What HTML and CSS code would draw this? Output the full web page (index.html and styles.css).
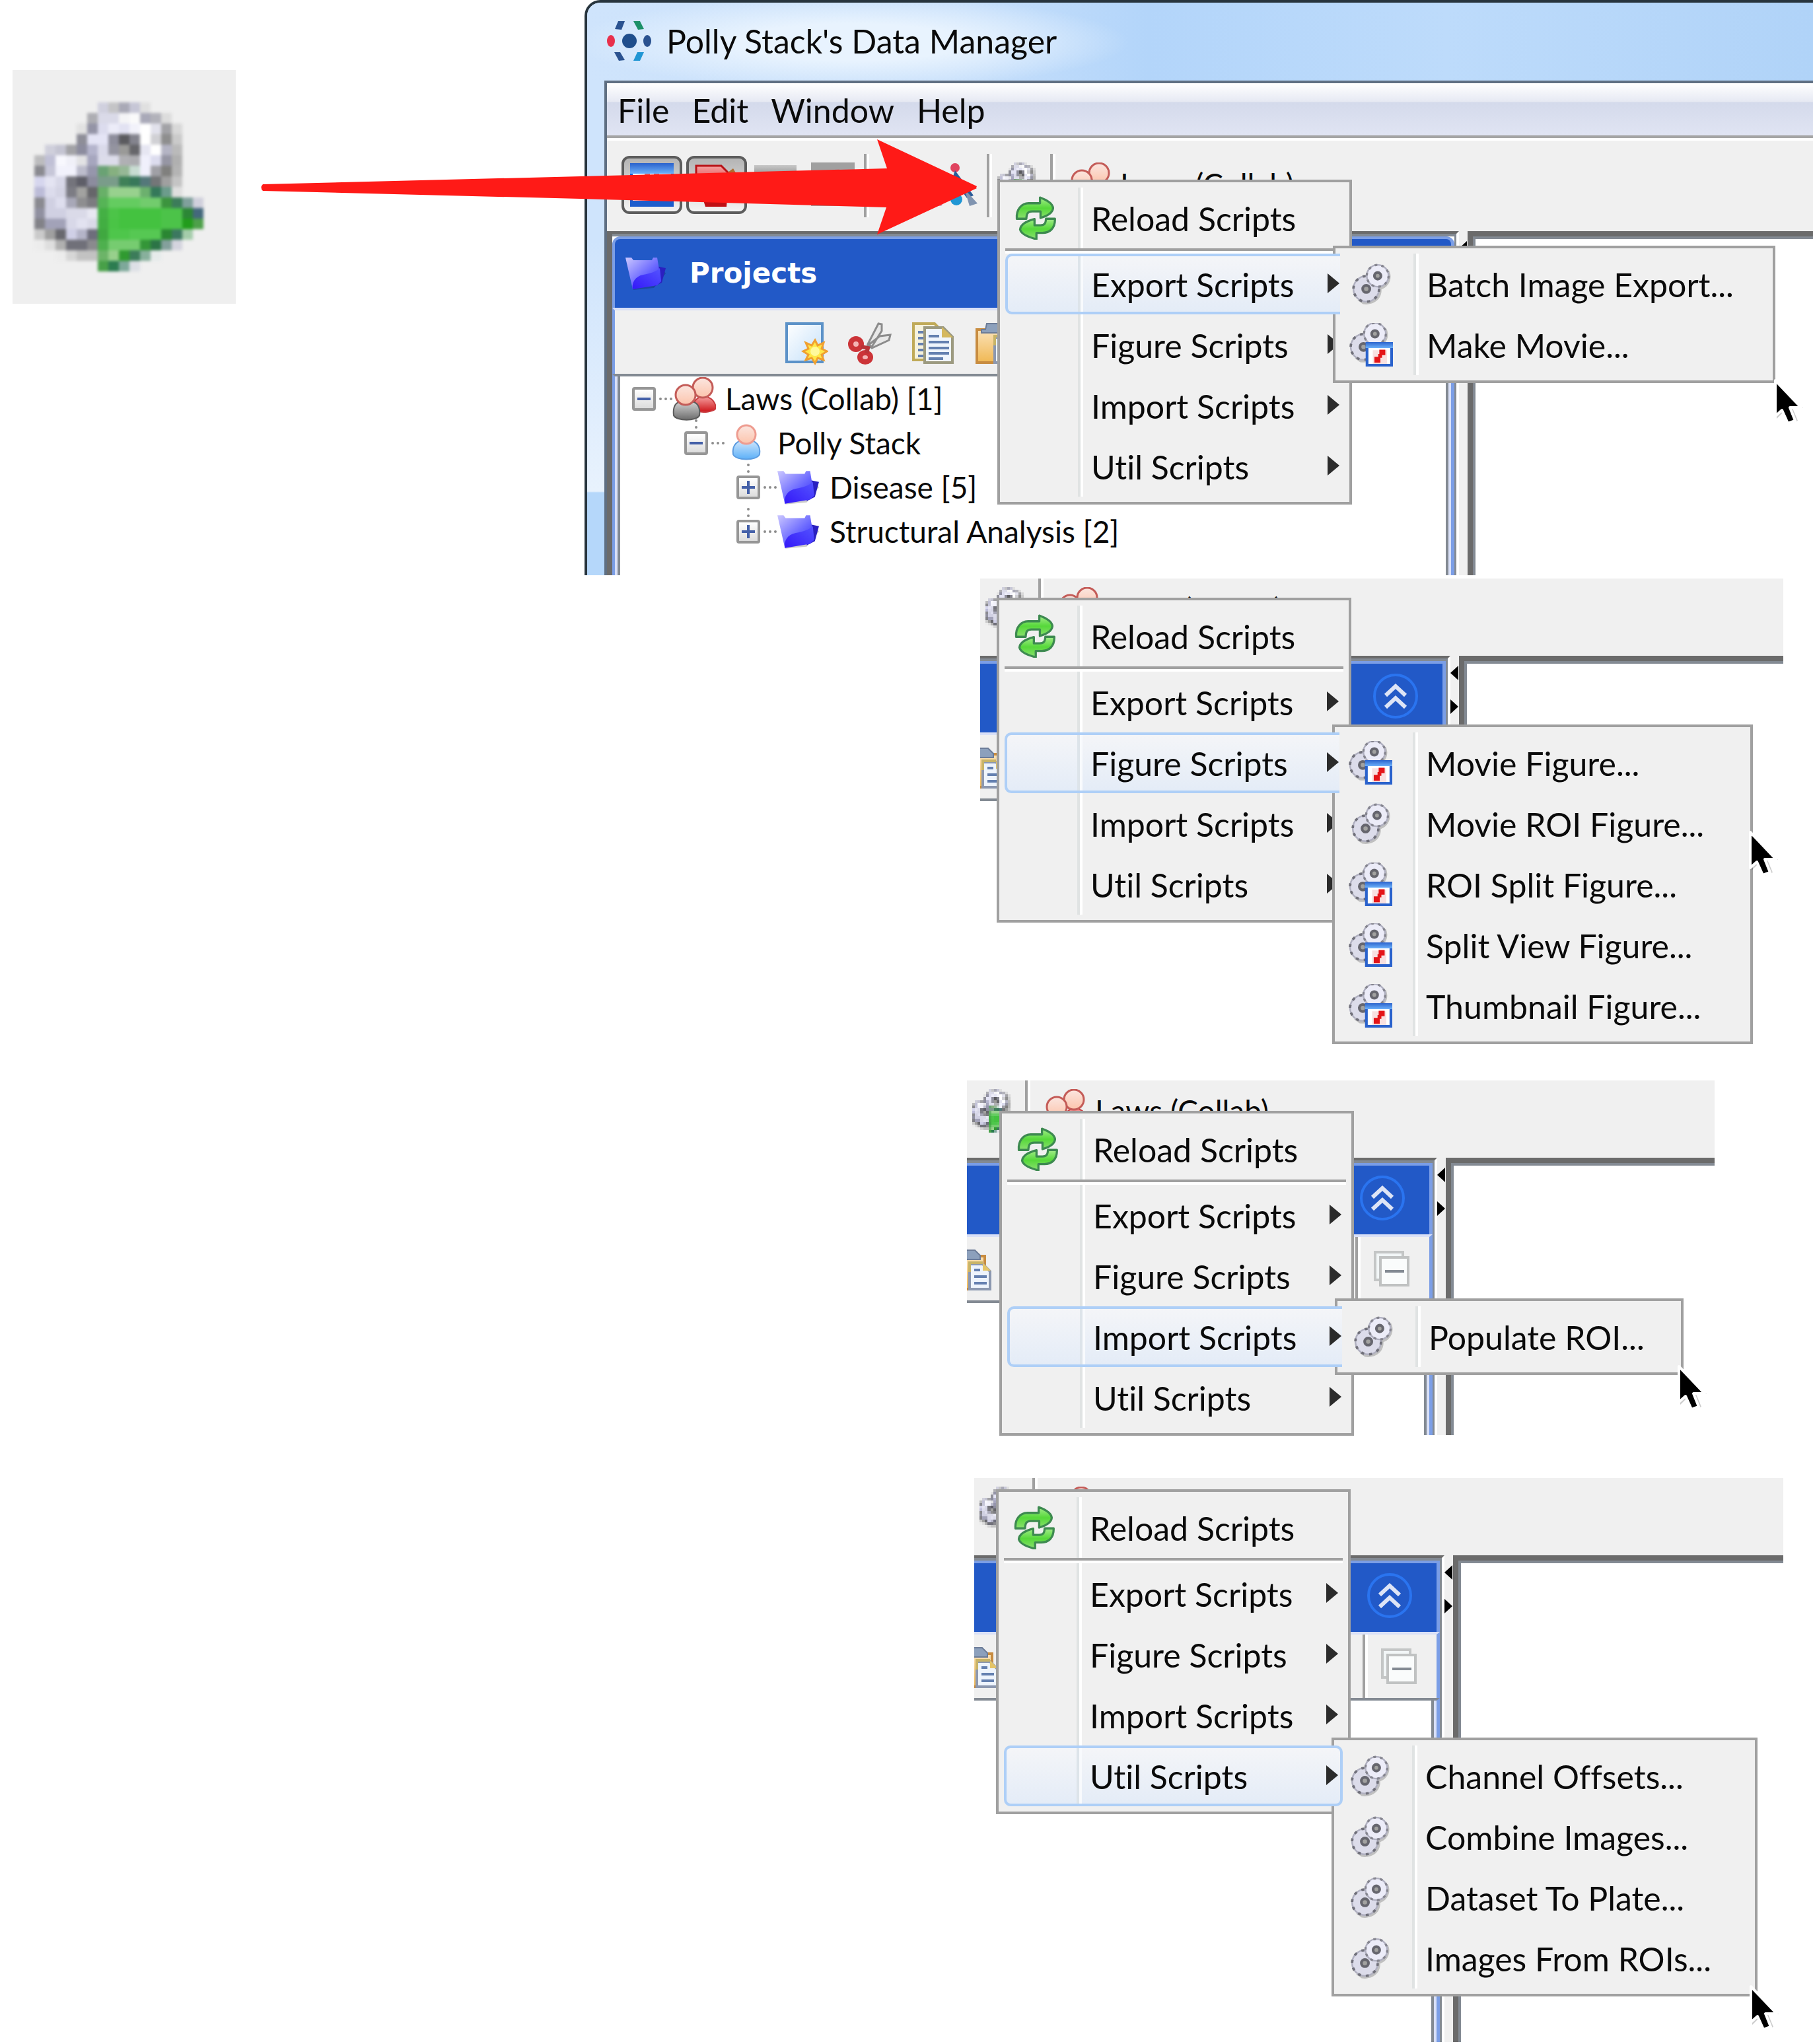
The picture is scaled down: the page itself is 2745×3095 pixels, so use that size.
FILE: index.html
```html
<!DOCTYPE html>
<html lang="en">
<head>
<meta charset="utf-8">
<title>Running scripts from the Data Manager</title>
<link rel="stylesheet" href="styles.css">
</head>
<body>
<svg class="defs" aria-hidden="true">
  <defs>
    <linearGradient id="g-green" x1="0" y1="0" x2="0" y2="1"><stop offset="0" stop-color="#a4ec8c"/><stop offset=".5" stop-color="#56d83a"/><stop offset="1" stop-color="#8be070"/></linearGradient>
    <linearGradient id="g-folder" x1="0" y1="0" x2="1" y2="1"><stop offset="0" stop-color="#ccc8ff"/><stop offset=".55" stop-color="#6a68ff"/><stop offset="1" stop-color="#2a20f0"/></linearGradient>
    <linearGradient id="g-flap" x1="1" y1="0" x2="0" y2="1"><stop offset="0" stop-color="#5454ff"/><stop offset="1" stop-color="#3418f8"/></linearGradient>
    <linearGradient id="g-skin" x1="0" y1="0" x2="0" y2="1"><stop offset="0" stop-color="#fbe6e0"/><stop offset="1" stop-color="#fcc4ac"/></linearGradient>
    <linearGradient id="g-red" x1="0" y1="0" x2="0" y2="1"><stop offset="0" stop-color="#f6a0a0"/><stop offset="1" stop-color="#cc1418"/></linearGradient>
    <linearGradient id="g-grey" x1="0" y1="0" x2="0" y2="1"><stop offset="0" stop-color="#d8d8d8"/><stop offset="1" stop-color="#6c6c6c"/></linearGradient>
    <linearGradient id="g-blue" x1="0" y1="0" x2="0" y2="1"><stop offset="0" stop-color="#d4e8fc"/><stop offset="1" stop-color="#5cb0f8"/></linearGradient>
    <linearGradient id="g-page" x1="0" y1="0" x2="1" y2="1"><stop offset="0" stop-color="#fff"/><stop offset="1" stop-color="#c4e0fa"/></linearGradient>
    <linearGradient id="g-clip" x1="0" y1="0" x2="0" y2="1"><stop offset="0" stop-color="#fbe2b8"/><stop offset="1" stop-color="#f0b854"/></linearGradient>
    <linearGradient id="g-bar" x1="0" y1="0" x2="0" y2="1"><stop offset="0" stop-color="#2a62cc"/><stop offset="1" stop-color="#6cb0fa"/></linearGradient>
  </defs>

  <symbol id="i-run" viewBox="0 0 16 16"><g stroke-width="1" shape-rendering="crispEdges">
    <path stroke="#d0d0de" d="M6 .5h1"/><path stroke="#c4c4c6" d="M7 .5h1"/><path stroke="#a9a9b6" d="M8 .5h1"/><path stroke="#c6c6d6" d="M9 .5h1"/><path stroke="#e0e0e0" d="M10 .5h1"/>
    <path stroke="#adadb2" d="M5 1.5h1"/><path stroke="#dadae8" d="M6 1.5h2"/><path stroke="#f4f4f6" d="M8 1.5h1"/><path stroke="#fafafa" d="M9 1.5h1"/><path stroke="#a9a9b8" d="M10 1.5h1"/><path stroke="#b2b2ba" d="M11 1.5h1"/><path stroke="#dcdcdc" d="M12 1.5h1"/>
    <path stroke="#e2e2e2" d="M4 2.5h1"/><path stroke="#9494a6" d="M5 2.5h1"/><path stroke="#dcdcee" d="M6 2.5h1"/><path stroke="#ececf8" d="M7 2.5h1"/><path stroke="#e2e2f2" d="M8 2.5h1"/><path stroke="#f2f2fa" d="M9 2.5h1"/><path stroke="#fff" d="M10 2.5h1"/><path stroke="#e2e2ec" d="M11 2.5h1"/><path stroke="#a2a2a6" d="M12 2.5h1"/><path stroke="#d8d8d8" d="M13 2.5h1"/>
    <path stroke="#8e8e98" d="M4 3.5h1"/><path stroke="#e4e4f5" d="M5 3.5h2"/><path stroke="#8e8e9c" d="M7 3.5h1"/><path stroke="#5a5a5e" d="M8 3.5h1"/><path stroke="#84848e" d="M9 3.5h1"/><path stroke="#fff" d="M10 3.5h1"/><path stroke="#d0d0d4" d="M11 3.5h1"/><path stroke="#8e8e8e" d="M12 3.5h1"/><path stroke="#cacaca" d="M13 3.5h1"/>
    <path stroke="#cfcfdb" d="M1 4.5h1"/><path stroke="#c4c4d2" d="M2 4.5h1"/><path stroke="#a2a2a6" d="M3 4.5h1"/><path stroke="#8c8c9e" d="M4 4.5h1"/><path stroke="#b4b4cc" d="M5 4.5h1"/><path stroke="#dadaea" d="M6 4.5h1"/><path stroke="#9494a0" d="M7 4.5h1"/><path stroke="#9a9a98" d="M8 4.5h1"/><path stroke="#66666a" d="M9 4.5h1"/><path stroke="#e6e6f2" d="M10 4.5h1"/><path stroke="#fff" d="M11 4.5h1"/><path stroke="#b4b4c4" d="M12 4.5h1"/><path stroke="#bababa" d="M13 4.5h1"/>
    <path stroke="#bcbcbe" d="M0 5.5h1"/><path stroke="#c0c0d6" d="M1 5.5h1"/><path stroke="#f8f8fe" d="M2 5.5h1"/><path stroke="#f0f0f8" d="M3 5.5h1"/><path stroke="#e2e2e4" d="M4 5.5h1"/><path stroke="#a6a6be" d="M5 5.5h1"/><path stroke="#dcdcea" d="M6 5.5h2"/><path stroke="#b0b0b4" d="M8 5.5h1"/><path stroke="#acacb0" d="M9 5.5h1"/><path stroke="#f0f0fc" d="M10 5.5h1"/><path stroke="#dcdcee" d="M11 5.5h1"/><path stroke="#9696a4" d="M12 5.5h1"/><path stroke="#b0b0b0" d="M13 5.5h1"/>
    <path stroke="#8a8a90" d="M0 6.5h1"/><path stroke="#c6c6d8" d="M1 6.5h1"/><path stroke="#f2f2fc" d="M2 6.5h2"/><path stroke="#bcbccc" d="M4 6.5h1"/><path stroke="#9696ac" d="M5 6.5h1"/><path stroke="#6aa274" d="M6 6.5h1"/><path stroke="#86b080" d="M7 6.5h1"/><path stroke="#96b896" d="M8 6.5h1"/><path stroke="#c8dcd2" d="M9 6.5h1"/><path stroke="#f0f0fc" d="M10 6.5h1"/><path stroke="#a0a0a6" d="M11 6.5h1"/><path stroke="#80807e" d="M12 6.5h1"/><path stroke="#b4b4b4" d="M13 6.5h1"/>
    <path stroke="#d6d6ee" d="M0 7.5h1"/><path stroke="#e4e4f2" d="M1 7.5h1"/><path stroke="#d8d8e8" d="M2 7.5h1"/><path stroke="#74747c" d="M3 7.5h1"/><path stroke="#5e5e68" d="M4 7.5h1"/><path stroke="#8c8c9e" d="M5 7.5h1"/><path stroke="#7a9c8a" d="M6 7.5h2"/><path stroke="#3f8058" d="M8 7.5h1"/><path stroke="#38785a" d="M9 7.5h1"/><path stroke="#54787a" d="M10 7.5h1"/><path stroke="#747678" d="M11 7.5h1"/><path stroke="#a0a0a0" d="M12 7.5h1"/><path stroke="#c4c4c4" d="M13 7.5h1"/>
    <path stroke="#bcbcd8" d="M0 8.5h1"/><path stroke="#dcdcec" d="M1 8.5h1"/><path stroke="#d4d4e4" d="M2 8.5h1"/><path stroke="#7c7c84" d="M3 8.5h1"/><path stroke="#a2a2a0" d="M4 8.5h1"/><path stroke="#66666a" d="M5 8.5h1"/><path stroke="#68b068" d="M6 8.5h1"/><path stroke="#98d18e" d="M7 8.5h3"/><path stroke="#6cb06e" d="M10 8.5h1"/><path stroke="#34785a" d="M11 8.5h1"/><path stroke="#6c9c8c" d="M12 8.5h1"/><path stroke="#dedede" d="M13 8.5h1"/>
    <path stroke="#8a8a90" d="M0 9.5h1"/><path stroke="#d0d0e2" d="M1 9.5h1"/><path stroke="#dedeee" d="M2 9.5h1"/><path stroke="#a8a8b8" d="M3 9.5h1"/><path stroke="#8e8e90" d="M4 9.5h1"/><path stroke="#7c7c80" d="M5 9.5h1"/><path stroke="#56b456" d="M6 9.5h1"/><path stroke="#64cc60" d="M7 9.5h3"/><path stroke="#72cc6d" d="M10 9.5h2"/><path stroke="#3c943e" d="M12 9.5h1"/><path stroke="#3c7c5a" d="M13 9.5h1"/><path stroke="#80a09c" d="M14 9.5h1"/><path stroke="#d0d0dc" d="M15 9.5h1"/>
    <path stroke="#9090a0" d="M0 10.5h1"/><path stroke="#d0d0e2" d="M1 10.5h2"/><path stroke="#dadae8" d="M3 10.5h2"/><path stroke="#e8e8f2" d="M5 10.5h1"/><path stroke="#44b044" d="M6 10.5h1"/><path stroke="#4cc448" d="M7 10.5h1"/><path stroke="#44c240" d="M8 10.5h4"/><path stroke="#4cc349" d="M12 10.5h2"/><path stroke="#2c8636" d="M14 10.5h1"/><path stroke="#44687c" d="M15 10.5h1"/>
    <path stroke="#828288" d="M0 11.5h1"/><path stroke="#a2a2b8" d="M1 11.5h2"/><path stroke="#d8d8e8" d="M3 11.5h1"/><path stroke="#e2e2f0" d="M4 11.5h1"/><path stroke="#dadae8" d="M5 11.5h1"/><path stroke="#42ae42" d="M6 11.5h1"/><path stroke="#4ac446" d="M7 11.5h1"/><path stroke="#44c240" d="M8 11.5h4"/><path stroke="#4cc349" d="M12 11.5h2"/><path stroke="#229c1c" d="M14 11.5h1"/><path stroke="#4ea04a" d="M15 11.5h1"/>
    <path stroke="#cacaca" d="M0 12.5h1"/><path stroke="#a0a0a0" d="M1 12.5h1"/><path stroke="#68686e" d="M2 12.5h1"/><path stroke="#cfcfe6" d="M3 12.5h1"/><path stroke="#b4b4c8" d="M4 12.5h1"/><path stroke="#6e6e7c" d="M5 12.5h1"/><path stroke="#40a840" d="M6 12.5h1"/><path stroke="#4ec64b" d="M7 12.5h2"/><path stroke="#56c853" d="M9 12.5h3"/><path stroke="#2a8632" d="M12 12.5h1"/><path stroke="#3c7860" d="M13 12.5h1"/><path stroke="#a4ccaa" d="M14 12.5h1"/>
    <path stroke="#ececec" d="M0 13.5h1"/><path stroke="#dedede" d="M1 13.5h1"/><path stroke="#b0b0b0" d="M2 13.5h1"/><path stroke="#707079" d="M3 13.5h2"/><path stroke="#8a8a8e" d="M5 13.5h1"/><path stroke="#4eb04e" d="M6 13.5h1"/><path stroke="#76cc70" d="M7 13.5h3"/><path stroke="#349638" d="M10 13.5h1"/><path stroke="#2c7446" d="M11 13.5h1"/><path stroke="#84a09c" d="M12 13.5h1"/><path stroke="#d4d4de" d="M13 13.5h1"/>
    <path stroke="#ececec" d="M2 14.5h1"/><path stroke="#d6d6d6" d="M3 14.5h1"/><path stroke="#c2c2c2" d="M4 14.5h2"/><path stroke="#6cb468" d="M6 14.5h1"/><path stroke="#98d08c" d="M7 14.5h1"/><path stroke="#309a30" d="M8 14.5h1"/><path stroke="#3c7c5a" d="M9 14.5h1"/><path stroke="#88b09c" d="M10 14.5h1"/><path stroke="#e6ebeb" d="M11 14.5h1"/>
    <path stroke="#48a048" d="M6 15.5h1"/><path stroke="#2c7c50" d="M7 15.5h1"/><path stroke="#7ea89a" d="M8 15.5h1"/><path stroke="#dde0e6" d="M9 15.5h1"/>
  </g></symbol>

  <symbol id="i-gears" viewBox="0 0 16 16">
    <path d="M14.600 3a5 5 0 0 1-2.800 7C12 13.500 9 16 5 15.400L3 14z" fill="#000" opacity=".2"/>
    <circle cx="6.200" cy="9.800" r="4.700" fill="#dcdcea" stroke="#b0b0c0" stroke-width=".6"/>
    <circle cx="6.200" cy="9.800" r="4.700" fill="none" stroke="#70707a" stroke-width=".9" stroke-dasharray="1.100 1.853"/>
    <circle cx="6.200" cy="9.800" r="1.300" fill="#a2a2a0" stroke="#66666e" stroke-width="1"/>
    <circle cx="10.400" cy="5" r="4" fill="#ececf8" stroke="#b0b0c0" stroke-width=".6"/>
    <circle cx="10.400" cy="5" r="4" fill="none" stroke="#85858f" stroke-width=".8" stroke-dasharray="1 1.513"/>
    <circle cx="10.400" cy="5" r="1.200" fill="#a2a2a0" stroke="#66666e" stroke-width="1"/>
  </symbol>

  <symbol id="i-movie" viewBox="0 0 16 16">
    <use href="#i-gears" x="-1" y="-1" width="16" height="16"/>
    <path d="M6.500 7.500h9v8h-9z" fill="#fff" stroke="#2a62cc" stroke-width="1"/>
    <path d="M6 7h10v2.200H6z" fill="url(#g-bar)"/>
    <path d="M8.600 10h5.200v5H8.600z" fill="#f8e0e0"/>
    <path d="M11 9.800h2.200v2H11zM9.200 12.400h2.200v2.200H9.200zM10.600 11.400h1.400v1.400h-1.400z" fill="#e41418"/>
  </symbol>

  <symbol id="i-reload" viewBox="0 0 16 16">
    <g stroke="#3d8a50" stroke-width=".8" stroke-linejoin="round" fill="url(#g-green)">
      <path d="M1.100 8.300C.8 4.800 2.800 2.700 5.500 2.600H9.600V.5q4.600 1.700 4.800 3.900Q14.200 6.700 9.800 8V5.600H6.700C5 5.600 4.700 6.500 4.600 8.300z"/>
      <path d="M15.100 8.300c.1 3.600-2 5.200-4.600 5.200H8.300v2.300Q2.700 14.400 2.300 12.200 2.600 9.700 7.600 8.400v2.300h2.200c1.500 0 1.900-.7 2-2.400z"/>
    </g>
  </symbol>

  <symbol id="i-folder" viewBox="0 0 64 50">
    <path d="M12 50l32-3 18-22-4-6z" fill="#000" opacity=".2"/>
    <path d="M48 14l14 3-6 22-12 6z" fill="#2a20c0"/>
    <path d="M1 1h9l3 4h28l2-4h6l6 36-43 12z" fill="url(#g-folder)"/>
    <path d="M12 49c-2-10 4-20 16-22 11-2 20-5 25-10l2 20-6 6z" fill="url(#g-flap)"/>
  </symbol>

  <symbol id="i-users" viewBox="0 0 66 66">
    <path d="M38 50c-2-20 24-20 26-2 0 5-24 9-26 2z" fill="#000" opacity=".12"/>
    <path d="M32 46c-2-20 30-24 34 0 0 6-20 10-34 4z" fill="url(#g-red)" stroke="#c83c40" stroke-width="2"/>
    <ellipse cx="46" cy="16" rx="15" ry="15" fill="url(#g-skin)" stroke="#c45c58" stroke-width="3"/>
    <path d="M2 58c-2-18 6-22 19-22s22 4 20 22c-4 9-35 9-39 0z" fill="url(#g-grey)" stroke="#5c5c5c" stroke-width="2"/>
    <ellipse cx="20" cy="27" rx="15" ry="15" fill="url(#g-skin)" stroke="#c45c58" stroke-width="3"/>
  </symbol>

  <symbol id="i-user" viewBox="0 0 66 66">
    <path d="M13 50c-2-14 6-22 20-22s22 8 20 22c-4 10-36 10-40 0z" fill="url(#g-blue)" stroke="#5c9ce0" stroke-width="2"/>
    <ellipse cx="33" cy="20" rx="14" ry="14" fill="url(#g-skin)" stroke="#ee9c90" stroke-width="3"/>
  </symbol>

  <symbol id="i-new" viewBox="0 0 66 66">
    <path d="M3 3h54v58H3z" fill="url(#g-page)" stroke="#5c92c8" stroke-width="4"/>
    <path d="M46 28l4 8 9-4-3 9 8 4-8 5 3 8-9-3-4 8-5-8-9 3 4-8-8-5 8-4-4-9 9 4z" fill="#ffe848" stroke="#f0a030" stroke-width="3"/>
    <circle cx="46" cy="45" r="7" fill="#fffa9c"/>
  </symbol>

  <symbol id="i-cut" viewBox="0 0 66 66">
    <path d="M30 34L46 3l5 1v10L36 38zM30 36l18-14 16-2-2 8-26 12z" fill="#e8e8e8" stroke="#8c8c8c" stroke-width="3"/>
    <ellipse cx="12" cy="34" rx="8" ry="8" fill="#f4b4b4" stroke="#cc3438" stroke-width="8"/>
    <ellipse cx="26" cy="54" rx="8" ry="7" fill="#f4b4b4" stroke="#cc3438" stroke-width="8"/>
    <path d="M20 38l10 2-2 8" fill="none" stroke="#b83438" stroke-width="6"/>
  </symbol>

  <symbol id="i-copy" viewBox="0 0 66 66">
    <path d="M3 3h32l6 6v49H3z" fill="#f6f2dc" stroke="#c0aa58" stroke-width="4"/>
    <path d="M10 16h8M10 25h8M10 34h8M10 43h8M10 52h8" stroke="#6480b0" stroke-width="4"/>
    <path d="M20 9h28l14 14v39H20z" fill="#f0f5fc" stroke="#9c9a80" stroke-width="4"/>
    <path d="M46 8l17 16H46z" fill="#d4b860"/>
    <path d="M26 22h16M26 31h31M26 40h31M26 48h31M26 56h22" stroke="#6480b0" stroke-width="4"/>
  </symbol>

  <symbol id="i-paste" viewBox="0 0 66 66">
    <path d="M3 12h50v50H3z" fill="url(#g-clip)" stroke="#c88c40" stroke-width="4"/>
    <path d="M18 3h20l8 8v6H10v-5h6z" fill="#8ca0bc" stroke="#6c7c98" stroke-width="2"/>
    <path d="M30 24h20l11 11v27H30z" fill="#eef4fc" stroke="#8c98b0" stroke-width="4"/>
    <path d="M30 36V22h20" fill="none" stroke="#c8b468" stroke-width="4"/>
    <path d="M50 22v12h12z" fill="#e4c468"/>
    <path d="M37 33h9M37 43h19M37 53h19" stroke="#6480b0" stroke-width="4"/>
  </symbol>

  <symbol id="i-collapse" viewBox="0 0 54 54">
    <path d="M2 2h42v42H2z" fill="#f2f6f7" stroke="#c4c6c6" stroke-width="4"/>
    <path d="M10 10h42v42H10z" fill="#fafcfc" stroke="#c0c2c2" stroke-width="4"/>
    <path d="M17 31h29" stroke="#838a93" stroke-width="4"/>
  </symbol>

  <symbol id="i-up" viewBox="0 0 68 68">
    <circle cx="34" cy="34" r="32" fill="none" stroke="#2a74f0" stroke-width="4"/>
    <path d="M19 33l15-14 15 14M19 51l15-14 15 14" fill="none" stroke="#dde4f6" stroke-width="6"/>
  </symbol>

  <symbol id="i-cursor" viewBox="0 0 48 74">
    <path d="M6 10v52l12-12 8 20 12-5-8-19h16z" fill="#000" opacity=".2"/>
    <path d="M4 4v54l10-9 9 20 11-4-8-20h17z" fill="#000" stroke="#fff" stroke-width="4" stroke-linejoin="round"/>
  </symbol>
</svg>

<div class="page">
  <figure class="sample"><svg role="img" aria-label="Run scripts"><use href="#i-run"/></svg></figure>

  <main class="shots">
    <section class="shot window">
      <header class="title">
        <svg class="logo" viewBox="0 0 68 60" aria-hidden="true">
          <ellipse cx="6" cy="30" rx="6" ry="9" fill="#e8304c"/><circle cx="34" cy="30" r="11" fill="#1f4e8c"/><ellipse cx="61" cy="30" rx="6" ry="9" fill="#2a5290"/>
          <path d="M12 12L17 0h10l-5 13z" fill="#2a5290"/><path d="M40 0h10l6 12-9 1z" fill="#1c9068"/>
          <path d="M11 47h9l7 12-9 1z" fill="#2a5290"/><path d="M46 47h10l-6 13H40z" fill="#2096d4"/>
        </svg>
        <h1>Polly Stack's Data Manager</h1>
      </header>
      <div class="client">
        <nav class="menubar"><button>File</button><button>Edit</button><button>Window</button><button>Help</button></nav>
        <div class="toolbar">
          <button class="toggle" aria-label="Projects view"><svg class="ico" viewBox="0 0 66 66"><path d="M2 2h62v62H2z" fill="#fff" stroke="#1c5ccc" stroke-width="4"/><path d="M0 0h66v16H0z" fill="url(#g-bar)"/><path d="M22 16h8v10h-8zM36 16h8v10h-8z" fill="#d86868"/><path d="M0 57h66v9H0z" fill="#1c5ccc"/></svg></button>
          <button class="toggle" aria-label="Annotations"><svg class="ico" viewBox="0 0 66 66"><path d="M2 4h38l14 14-4 28H2z" fill="url(#g-red)" stroke="#b81418" stroke-width="3"/><path d="M8 40h42l-2 26H16z" fill="#c01014"/><path d="M50 14l8-6 6 10-6 6z" fill="#b06c30"/></svg></button>
          <span class="blank"></span><span class="blank dark"></span>
          <span class="sep"></span>
          <button class="tool search" aria-label="Search"><svg class="ico" viewBox="0 0 66 66"><circle cx="30" cy="8" r="7" fill="#e04460"/><path d="M30 12l28 38-10 4-22-30z" fill="#2a5c98"/><path d="M44 40l20 22-12 4z" fill="#8094b0"/><circle cx="32" cy="56" r="9" fill="#2096d4"/><circle cx="6" cy="62" r="5" fill="#d8a0b8"/></svg></button>
          <span class="sep"></span>
          <button class="tool" aria-label="Run scripts"><svg class="ico"><use href="#i-run"/></svg></button>
          <span class="sep"></span>
          <button class="tool group"><svg class="ico"><use href="#i-users"/></svg>Laws (Collab)</button>
        </div>
        <div class="split">
          <section class="side">
            <div class="frame">
              <header class="bar"><svg class="folder"><use href="#i-folder"/></svg><h2>Projects</h2><button class="up" aria-label="Collapse panel"><svg><use href="#i-up"/></svg></button></header>
              <div class="tools">
                <button aria-label="New"><svg class="ico"><use href="#i-new"/></svg></button>
                <button aria-label="Cut"><svg class="ico"><use href="#i-cut"/></svg></button>
                <button aria-label="Copy"><svg class="ico"><use href="#i-copy"/></svg></button>
                <button aria-label="Paste"><svg class="ico"><use href="#i-paste"/></svg></button>
                <button class="all" aria-label="Collapse all"><svg><use href="#i-collapse"/></svg></button>
              </div>
              <ul class="tree">
                <li><div class="node"><button class="box" aria-label="Collapse"></button><i></i><svg class="ico"><use href="#i-users"/></svg>Laws (Collab) [1]</div>
                  <ul>
                    <li><div class="node"><button class="box" aria-label="Collapse"></button><i></i><svg class="ico"><use href="#i-user"/></svg>Polly Stack</div>
                      <ul>
                        <li><div class="node"><button class="box plus" aria-label="Expand"></button><i></i><svg class="ico"><use href="#i-folder"/></svg>Disease [5]</div></li>
                        <li><div class="node"><button class="box plus" aria-label="Expand"></button><i></i><svg class="ico"><use href="#i-folder"/></svg>Structural Analysis [2]</div></li>
                      </ul></li>
                  </ul></li>
              </ul>
            </div>
          </section>
          <div class="divider"><span class="nub left"></span><span class="nub"></span></div>
          <section class="content"></section>
        </div>
      </div>
      <ul class="menu at-export">
        <li><button><svg class="ico"><use href="#i-reload"/></svg>Reload Scripts</button></li>
        <li class="rule"></li>
        <li class="open"><button class="more">Export Scripts</button>
          <ul class="menu sub w-export">
            <li><button><svg class="ico"><use href="#i-gears"/></svg>Batch Image Export...</button></li>
            <li><button><svg class="ico"><use href="#i-movie"/></svg>Make Movie...</button></li>
          </ul></li>
        <li><button class="more">Figure Scripts</button></li>
        <li><button class="more">Import Scripts</button></li>
        <li><button class="more">Util Scripts</button></li>
      </ul>
      <svg class="cursor c-export"><use href="#i-cursor"/></svg>
    </section>

    <section class="shot crop figure-shot">
      <div class="toolbar">
        <button class="tool" aria-label="Run scripts"><svg class="ico"><use href="#i-run"/></svg></button>
        <span class="sep"></span>
        <button class="tool group"><svg class="ico"><use href="#i-users"/></svg>Laws (Collab)</button>
      </div>
      <div class="split">
        <section class="side"><div class="frame">
          <header class="bar"><button class="up" aria-label="Collapse panel"><svg><use href="#i-up"/></svg></button></header>
          <div class="tools"><button aria-label="Paste"><svg class="ico"><use href="#i-paste"/></svg></button><button class="all" aria-label="Collapse all"><svg><use href="#i-collapse"/></svg></button></div>
          <div class="tree"></div>
        </div></section>
        <div class="divider"><span class="nub left"></span><span class="nub"></span></div>
        <section class="content"></section>
      </div>
      <ul class="menu at-figure">
        <li><button><svg class="ico"><use href="#i-reload"/></svg>Reload Scripts</button></li>
        <li class="rule"></li>
        <li><button class="more">Export Scripts</button></li>
        <li class="open"><button class="more">Figure Scripts</button>
          <ul class="menu sub w-figure">
            <li><button><svg class="ico"><use href="#i-movie"/></svg>Movie Figure...</button></li>
            <li><button><svg class="ico"><use href="#i-gears"/></svg>Movie ROI Figure...</button></li>
            <li><button><svg class="ico"><use href="#i-movie"/></svg>ROI Split Figure...</button></li>
            <li><button><svg class="ico"><use href="#i-movie"/></svg>Split View Figure...</button></li>
            <li><button><svg class="ico"><use href="#i-movie"/></svg>Thumbnail Figure...</button></li>
          </ul></li>
        <li><button class="more">Import Scripts</button></li>
        <li><button class="more">Util Scripts</button></li>
      </ul>
      <svg class="cursor c-figure"><use href="#i-cursor"/></svg>
    </section>

    <section class="shot crop import-shot">
      <div class="toolbar">
        <button class="tool" aria-label="Run scripts"><svg class="ico"><use href="#i-run"/></svg></button>
        <span class="sep"></span>
        <button class="tool group"><svg class="ico"><use href="#i-users"/></svg>Laws (Collab)</button>
      </div>
      <div class="split">
        <section class="side"><div class="frame">
          <header class="bar"><button class="up" aria-label="Collapse panel"><svg><use href="#i-up"/></svg></button></header>
          <div class="tools"><button aria-label="Paste"><svg class="ico"><use href="#i-paste"/></svg></button><button class="all" aria-label="Collapse all"><svg><use href="#i-collapse"/></svg></button></div>
          <div class="tree"></div>
        </div></section>
        <div class="divider"><span class="nub left"></span><span class="nub"></span></div>
        <section class="content"></section>
      </div>
      <ul class="menu at-import">
        <li><button><svg class="ico"><use href="#i-reload"/></svg>Reload Scripts</button></li>
        <li class="rule"></li>
        <li><button class="more">Export Scripts</button></li>
        <li><button class="more">Figure Scripts</button></li>
        <li class="open"><button class="more">Import Scripts</button>
          <ul class="menu sub w-import">
            <li><button><svg class="ico"><use href="#i-gears"/></svg>Populate ROI...</button></li>
          </ul></li>
        <li><button class="more">Util Scripts</button></li>
      </ul>
      <svg class="cursor c-import"><use href="#i-cursor"/></svg>
    </section>

    <section class="shot crop util-shot">
      <div class="toolbar">
        <button class="tool" aria-label="Run scripts"><svg class="ico"><use href="#i-run"/></svg></button>
        <span class="sep"></span>
        <button class="tool group" aria-label="Group"><svg class="ico"><use href="#i-users"/></svg></button>
      </div>
      <div class="split">
        <section class="side"><div class="frame">
          <header class="bar"><button class="up" aria-label="Collapse panel"><svg><use href="#i-up"/></svg></button></header>
          <div class="tools"><button aria-label="Paste"><svg class="ico"><use href="#i-paste"/></svg></button><button class="all" aria-label="Collapse all"><svg><use href="#i-collapse"/></svg></button></div>
          <div class="tree"></div>
        </div></section>
        <div class="divider"><span class="nub left"></span><span class="nub"></span></div>
        <section class="content"></section>
      </div>
      <ul class="menu at-util">
        <li><button><svg class="ico"><use href="#i-reload"/></svg>Reload Scripts</button></li>
        <li class="rule"></li>
        <li><button class="more">Export Scripts</button></li>
        <li><button class="more">Figure Scripts</button></li>
        <li><button class="more">Import Scripts</button></li>
        <li class="open full"><button class="more">Util Scripts</button>
          <ul class="menu sub w-util">
            <li><button><svg class="ico"><use href="#i-gears"/></svg>Channel Offsets...</button></li>
            <li><button><svg class="ico"><use href="#i-gears"/></svg>Combine Images...</button></li>
            <li><button><svg class="ico"><use href="#i-gears"/></svg>Dataset To Plate...</button></li>
            <li><button><svg class="ico"><use href="#i-gears"/></svg>Images From ROIs...</button></li>
          </ul></li>
      </ul>
      <svg class="cursor c-util"><use href="#i-cursor"/></svg>
    </section>
  </main>

  <svg class="pointer" viewBox="0 0 1086 144" aria-hidden="true"><path d="M4 68L485 56 949 44 934 0l151 71-1 2 1 1-151 70 14-41L485 90 4 78q-5-5 0-10z" fill="#ff1a17"/></svg>
</div>
</body>
</html>
```
FILE: styles.css
```css
* { box-sizing: border-box; }
:root {
  --face: #f0f0f0;
  --line: #a0a0a0;
  --edge: #6b6b6b;
  --slate: #838a93;
  --trim: #7b9ee6;
  --pale: #d9e0f7;
}
body { margin: 0; background: #fff; color: #0a0a0a; font: 50px/60px Lato, "Noto Sans", sans-serif; font-variant-ligatures: none; }
h1, h2, ul, figure { margin: 0; padding: 0; list-style: none; font-weight: 400; }
button { margin: 0; padding: 0; border: 0; background: none; color: inherit; font: inherit; font-variant-ligatures: none; text-align: left; white-space: nowrap; }
svg { display: block; flex: none; }
.defs { position: absolute; width: 0; height: 0; }
.ico { width: 66px; height: 66px; }

.page { position: relative; display: flex; align-items: flex-start; gap: 528px; padding-left: 19px; }
.sample { flex: none; margin-top: 106px; padding: 49px 48px 49px 32px; background: #efefef; }
.sample svg { width: 258px; height: 256px; filter: blur(2px); overflow: visible; }
.pointer { position: absolute; left: 394px; top: 211px; width: 1086px; height: 144px; z-index: 5; }

.shots { flex: 1; min-width: 0; }
.shot { position: relative; display: flex; flex-direction: column; }

/* application window */
.window {
  min-height: 871px;
  padding-left: 26px;
  border: solid #27343d;
  border-width: 4px 0 0 4px;
  border-top-left-radius: 24px;
  background: linear-gradient(#cfe4fc 122px, #cfe4fc 360px, #e8f2fd 740px, #b5d7fa 742px);
}
.title {
  display: flex; align-items: center; gap: 22px;
  height: 118px; margin-left: -26px; padding: 0 0 2px 30px;
  border-top-left-radius: 20px;
  background:
    radial-gradient(ellipse 420px 70px at 400px 60px, #e8f3fe 40%, transparent),
    linear-gradient(to right, #cfe4fc, #c8e0fb 550px, #b3d5fa 850px, #bddbfb 1300px, #b0d3f8);
}
.logo { width: 68px; height: 60px; }
.title h1 { font-size: 50px; }
.client { flex: 1; display: flex; flex-direction: column; border: solid #5f6f82; border-width: 4px 0 0 4px; }
.menubar {
  display: flex; align-items: center; gap: 34px; height: 83px; padding: 2px 0 0 16px;
  border-bottom: 4px solid #a5a5a5;
  background: linear-gradient(#fff, #e6e9f3 28px, #d4daeb 29px, #e0e4f3);
}

.toolbar { display: flex; align-items: flex-end; height: 117px; background: var(--face); overflow: hidden; }
.window .toolbar { height: 141px; padding-left: 22px; border-top: 4px solid #fff; }
.toggle {
  height: 88px; margin: 0 6px 26px 0; padding: 7px 9px; border: 4px solid #5c5c5c; border-radius: 12px;
  background: linear-gradient(#b4b4b4, #f4f4f4);
}
.tool { margin-bottom: 38px; }
.blank { width: 64px; height: 58px; margin: 0 0 42px 5px; background: linear-gradient(#c8c8c8, #a0a0a0 12px, #e0e0e0); }
.dark { width: 66px; height: 66px; margin: 0 0 38px 22px; background: #a0a0a0; }
.sep {
  width: 8px; height: 96px; margin: 0 14px 21px;
  background: linear-gradient(to right, var(--line) 4px, #fff 4px);
}
.group { display: flex; align-items: center; gap: 12px; margin-left: 6px; font-size: 46px; }
.search { margin-left: 86px; }
.search + .sep { margin-left: 12px; margin-right: 8px; }
.crop .tool:first-child { margin-left: 8px; }

.split { flex: 1; display: flex; }
.side { flex: none; width: 712px; border-top: 4px solid var(--edge); border-right: 4px solid #fff; background: #fff; }
.window .side { width: 1290px; border-left: 8px solid var(--edge); }
.frame {
  display: flex; flex-direction: column; height: 100%;
  border-top: 4px solid var(--slate); border-right: 3px solid var(--slate);
}
.bar {
  display: flex; align-items: center; height: 108px; padding-right: 37px;
  border: solid var(--trim); border-width: 4px 5px 0 0; background: #2259c7; color: #fff;
}
.window .bar { padding-left: 15px; border-left-width: 4px; border-radius: 12px 12px 0 0; }
.bar h2 { margin-left: 34px; font: 700 42px/60px "DejaVu Sans", sans-serif; }
.folder { width: 64px; height: 50px; }
.up { margin: 0 0 6px auto; }
.up svg { width: 68px; height: 68px; }
.tools {
  display: flex; align-items: flex-start; gap: 30px; height: 100px; padding-top: 17px;
  border-top: 4px solid var(--pale); border-right: 5px solid var(--trim);
  background: var(--face); overflow: hidden;
}
.crop .tools { margin-left: -26px; }
.crop .frame { overflow: hidden; }
.window .tools { padding-left: 257px; border-left: 4px solid var(--trim); }
.all {
  height: 96px; margin: -17px 0 0 auto; padding: 0 30px 0 24px;
  border-left: 4px solid var(--line);
  background: linear-gradient(to right, #fff 4px, transparent 4px);
}
.all svg { width: 54px; height: 54px; }
.tree {
  flex: 1; border-top: 4px solid var(--slate);
  border-right: 5px solid var(--trim);
  box-shadow: inset -4px 0 var(--pale), inset -8px 0 var(--slate);
}
.window .tree {
  padding-left: 26px; border-left: 4px solid var(--trim);
  box-shadow: inset -4px 0 var(--pale), inset -8px 0 var(--slate), inset 4px 0 var(--pale), inset 8px 0 var(--slate);
}
.tree ul { padding-left: 79px; }
.tree li { position: relative; }
.tree ul > li::before { content: ""; position: absolute; left: 16px; top: -2px; height: 14px; border-left: 4px dotted #8c8c8c; }
.node { display: flex; align-items: center; height: 67px; font-size: 46px; white-space: nowrap; }
.node i { width: 20px; margin: 0 0 0 5px; border-top: 4px dotted #8c8c8c; }
.node .ico { margin-right: 14px; }
.box {
  width: 36px; height: 36px; border: 4px solid #969696; border-radius: 4px;
  background:
    linear-gradient(#4460a8, #4460a8) center / 20px 4px no-repeat,
    linear-gradient(#fff, #dcdcdc);
}
.plus {
  background:
    linear-gradient(#4460a8, #4460a8) center / 20px 4px no-repeat,
    linear-gradient(#4460a8, #4460a8) center / 4px 20px no-repeat,
    linear-gradient(#fff, #dcdcdc);
}
.divider { flex: none; display: flex; flex-direction: column; gap: 29px; width: 13px; padding-top: 15px; background: var(--face); }
.nub { width: 12px; height: 22px; background: #000; clip-path: polygon(0 0, 100% 50%, 0 100%); }
.nub.left { clip-path: polygon(100% 0, 0 50%, 100% 100%); }
.content { flex: 1; border: solid var(--edge); border-width: 8px 0 0 8px; background: #fff; box-shadow: inset 4px 4px var(--slate); }

/* cropped views */
.figure-shot { min-height: 702px; margin: 5px 45px 0 599px; }
.import-shot { min-height: 537px; margin: 58px 149px 0 579px; }
.util-shot { min-height: 854px; margin: 65px 45px 0 590px; }

/* pop-up menus */
.menu {
  position: absolute; z-index: 2; width: 537px; padding: 8px; border: 4px solid var(--line);
  background:
    linear-gradient(to right, transparent 118px, #e0e3e3 118px, #e0e3e3 122px, #fff 122px, #fff 126px, transparent 126px) 0 8px / 100% calc(100% - 16px) no-repeat,
    var(--face);
}
.menu li { position: relative; }
.menu button { position: relative; display: flex; align-items: center; width: 100%; height: 92px; padding: 2px 0 0 130px; }
.menu .ico { position: absolute; left: 13px; top: 13px; }
.menu .rule { height: 8px; background: linear-gradient(var(--line) 4px, #fff 4px); }
.more::after {
  content: ""; position: absolute; left: 488px; top: 30px; width: 18px; height: 30px;
  background: #2b2b2b; clip-path: polygon(0 0, 100% 50%, 0 100%);
}
.menu .open { z-index: 1; }
.menu .open > button {
  z-index: 3; width: 507px; padding-left: 126px;
  border: 4px solid #aecff7; border-right: 0; border-radius: 10px 0 0 10px;
  background:
    linear-gradient(to right, transparent 106px, #dde4ea 106px, #dde4ea 110px, #f8fafd 110px, #f8fafd 114px, transparent 114px),
    linear-gradient(#f4f5f8, #e4ecf7);
}
.menu .open > .more::after { left: 484px; top: 26px; }
.menu .full > button { width: 513px; border-right: 4px solid #aecff7; border-radius: 10px; }
.sub { left: 496px; top: -12px; }
.at-export { left: 621px; top: 268px; }
.at-figure { left: 25px; top: 29px; }
.at-import { left: 49px; top: 46px; }
.at-util { left: 33px; top: 17px; }
.w-export { width: 670px; }
.w-figure { width: 637px; }
.w-import { width: 528px; }
.w-util { width: 645px; }
.cursor { position: absolute; z-index: 3; width: 48px; height: 74px; }
.c-export { left: 1795px; top: 568px; }
.c-figure { left: 1162px; top: 380px; }
.c-import { left: 1074px; top: 429px; }
.c-util { left: 1172px; top: 766px; }
```
